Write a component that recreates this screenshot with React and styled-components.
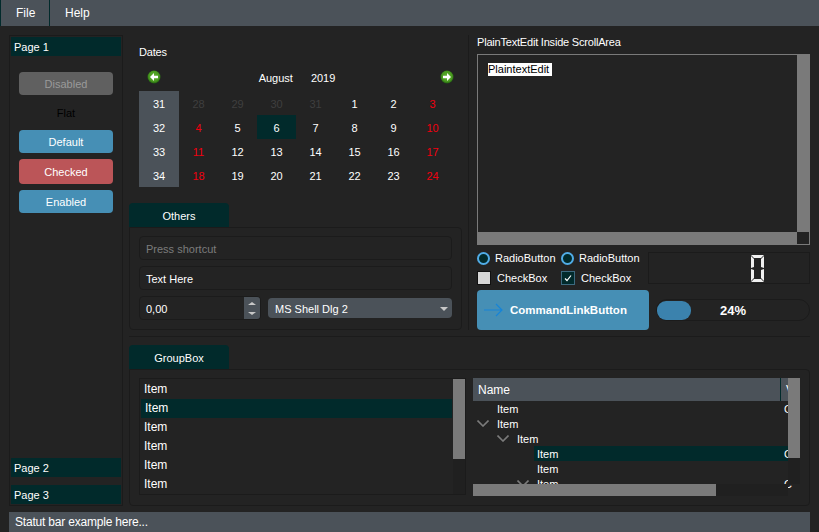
import React from "react";
import styled, { createGlobalStyle } from "styled-components";

const GlobalStyle = createGlobalStyle`
  html, body { margin: 0; padding: 0; background: #232323; }
  * { box-sizing: border-box; }
`;

const teal = "#012a2b";
const slate = "#4b5259";
const thumb = "#7a7a7a";
const line = "#1b1b1b";

const Window = styled.div`
  width: 819px;
  height: 532px;
  display: flex;
  flex-direction: column;
  overflow: hidden;
  background: #232323;
  color: #fff;
  font-family: "Liberation Sans", Arial, sans-serif;
  font-size: 11px;
`;

const MenuBar = styled.div`
  height: 26px;
  flex-shrink: 0;
  display: flex;
  background: ${slate};
  font-size: 12px;
`;

const MenuItem = styled.div`
  width: ${(p) => p.$width}px;
  padding-left: 15px;
  line-height: 26px;
  border-left: ${(p) => (p.$divided ? `1px solid ${teal}` : "none")};
`;

const Body = styled.div`
  flex: 1;
  display: flex;
  gap: 6px;
  padding: 9px 9px 0;
  min-height: 0;
`;

const ToolBox = styled.div`
  width: 114px;
  height: 471px;
  flex-shrink: 0;
  padding: 1px;
  display: flex;
  flex-direction: column;
  border: 1px solid ${line};
`;

const PageTab = styled.div`
  height: 19px;
  line-height: 21px;
  padding-left: 3px;
  background: ${teal};
  margin-top: ${(p) => p.$top || 0}px;
`;

const PageBody = styled.div`
  flex: 1;
  padding: 16px 8px 0;
  display: flex;
  flex-direction: column;
`;

const PushButton = styled.div`
  height: ${(p) => p.$height || 23}px;
  margin-bottom: ${(p) => p.$gap || 0}px;
  line-height: ${(p) => (p.$height || 23) + 2}px;
  text-align: center;
  border-radius: 4px;
  background: ${(p) => p.$bg || "transparent"};
  color: ${(p) => p.$fg || "#fff"};
`;

const Main = styled.div`
  flex: 1;
  min-width: 0;
  display: flex;
  flex-direction: column;
`;

const TopRow = styled.div`
  height: 295px;
  flex-shrink: 0;
  display: flex;
`;

const LeftColumn = styled.div`
  width: 333px;
  display: flex;
  flex-direction: column;
`;

const Caption = styled.div`
  height: ${(p) => p.$height}px;
  line-height: ${(p) => p.$line}px;
  letter-spacing: -0.2px;
`;

const DatesBox = styled.div`
  padding-left: 10px;
  height: 168px;
  flex-shrink: 0;
`;

const CalendarNav = styled.div`
  height: 22px;
  display: flex;
  align-items: center;
  padding: 0 8px 7px;
`;

const MonthYear = styled.div`
  flex: 1;
  display: flex;
  justify-content: center;
  gap: 18px;
  padding: 2px 7px 0 0;
`;

const CalendarGrid = styled.div`
  display: grid;
  grid-template-columns: 40px repeat(7, 39px);
  grid-auto-rows: 24px;
`;

const Cell = styled.div`
  display: flex;
  align-items: center;
  justify-content: center;
  padding-top: 2px;
  background: ${(p) => (p.$week ? slate : p.$selected ? teal : "transparent")};
  color: ${(p) => (p.$dim ? "#3f3f3f" : p.$red ? "#f2000f" : "#fff")};
`;

const GroupTab = styled.div`
  width: 100px;
  height: 24px;
  flex-shrink: 0;
  line-height: 27px;
  text-align: center;
  background: ${teal};
  border-radius: 4px 4px 0 0;
`;

const GroupFrame = styled.div`
  width: ${(p) => p.$width || "auto"};
  height: ${(p) => p.$height}px;
  flex-shrink: 0;
  border: 1px solid ${line};
  border-radius: 0 4px 4px 4px;
  padding: ${(p) => p.$padding};
`;

const OthersStack = styled.div`
  display: flex;
  flex-direction: column;
  gap: 6px;
`;

const Field = styled.div`
  height: 24px;
  line-height: 24px;
  padding-left: 6px;
  border: 1px solid ${line};
  border-radius: 4px;
  color: ${(p) => (p.$muted ? "#7c7c7c" : "#fff")};
`;

const SpinRow = styled.div`
  display: flex;
  align-items: center;
  gap: 7px;
`;

const SpinBox = styled.div`
  width: 122px;
  height: 24px;
  display: flex;
  border: 1px solid ${line};
  border-radius: 4px;
  overflow: hidden;
`;

const SpinValue = styled.div`
  flex: 1;
  line-height: 24px;
  padding-left: 6px;
`;

const SpinButtons = styled.div`
  width: 16px;
  display: flex;
  flex-direction: column;
  align-items: center;
  justify-content: center;
  gap: 7px;
  background: ${slate};
`;

const Triangle = styled.div`
  width: 0;
  height: 0;
  border-left: ${(p) => p.$size}px solid transparent;
  border-right: ${(p) => p.$size}px solid transparent;
  border-${(p) => (p.$up ? "bottom" : "top")}: ${(p) => p.$tall}px solid #c8c8c8;
`;

const Combo = styled.div`
  width: 184px;
  height: 20px;
  padding: 1px 4px 0 7px;
  display: flex;
  align-items: center;
  justify-content: space-between;
  background: ${slate};
  border-radius: 4px;
`;

const VSeparator = styled.div`
  width: 1px;
  height: 295px;
  margin: 0 8px 0 6px;
  background: ${line};
`;

const RightColumn = styled.div`
  width: 333px;
  display: flex;
  flex-direction: column;
`;

const PlainFrame = styled.div`
  position: relative;
  height: 191px;
  flex-shrink: 0;
  border: 1px solid ${thumb};
  padding: 8px 10px;
`;

const SelectedText = styled.span`
  display: block;
  width: fit-content;
  background: #fff;
  color: #000;
  line-height: 13px;
  padding-right: 3px;
`;

const VThumb = styled.div`
  position: absolute;
  top: ${(p) => p.$top || 0}px;
  right: 0;
  width: ${(p) => p.$width}px;
  height: ${(p) => p.$height}px;
  background: ${thumb};
`;

const HThumb = styled.div`
  position: absolute;
  left: 0;
  bottom: ${(p) => p.$bottom || 0}px;
  width: ${(p) => p.$width}px;
  height: 12px;
  background: ${thumb};
`;

const ControlsRow = styled.div`
  margin-top: 3px;
  display: flex;
  justify-content: space-between;
`;

const Choices = styled.div`
  display: grid;
  grid-template-columns: 84px 84px;
  grid-auto-rows: 20px;
`;

const Choice = styled.div`
  display: flex;
  align-items: center;
  gap: 5px;
`;

const Radio = styled.div`
  width: 13px;
  height: 13px;
  border-radius: 50%;
  background: ${teal};
  border: 2px solid #50ace6;
`;

const Check = styled.div`
  width: 14px;
  height: 14px;
  margin-right: 1px;
  display: flex;
  align-items: center;
  justify-content: center;
  background: ${(p) => (p.$on ? teal : "#d6d6d6")};
  border: 1px solid ${(p) => (p.$on ? "#3d6a80" : "#111")};
`;

const Lcd = styled.div`
  width: 162px;
  height: 32px;
  margin-top: 4px;
  padding-right: 45px;
  display: flex;
  align-items: center;
  justify-content: flex-end;
  border: 1px solid ${line};
`;

const CommandRow = styled.div`
  margin-top: 2px;
  display: flex;
  align-items: center;
  gap: 7px;
`;

const CommandLink = styled.div`
  width: 172px;
  height: 40px;
  padding-left: 7px;
  display: flex;
  align-items: center;
  gap: 7px;
  background: #468fb5;
  border-radius: 4px;
  font-weight: 700;
  font-size: 11.5px;
`;

const Progress = styled.div`
  position: relative;
  width: 154px;
  height: 22px;
  border: 1px solid ${line};
  border-radius: 11px;
  line-height: 22px;
  text-align: center;
  font-weight: 700;
  font-size: 13px;
`;

const ProgressChunk = styled.div`
  position: absolute;
  left: 0;
  top: 1px;
  bottom: 0;
  background: #3b82ad;
  border-radius: 9px;
`;

const ProgressLabel = styled.span`
  position: relative;
`;

const HSeparator = styled.div`
  height: 1px;
  flex-shrink: 0;
  margin: 6px 0 8px;
  background: ${line};
`;

const GroupInner = styled.div`
  display: flex;
  gap: 7px;
`;

const ListBox = styled.div`
  position: relative;
  width: 327px;
  height: 117px;
  padding: 1px;
  border: 1px solid ${line};
  overflow: hidden;
`;

const ListRow = styled.div`
  height: 19px;
  line-height: 19px;
  padding-left: ${(p) => (p.$selected ? 4 : 3)}px;
  margin-right: 12px;
  font-size: 12px;
  background: ${(p) => (p.$selected ? teal : "transparent")};
`;

const ScrollTrack = styled.div`
  position: absolute;
  top: ${(p) => p.$top || 0}px;
  right: ${(p) => p.$right || 0}px;
  bottom: ${(p) => p.$bottom || 0}px;
  left: ${(p) => (p.$left === undefined ? "auto" : `${p.$left}px`)};
  width: ${(p) => (p.$width ? `${p.$width}px` : "auto")};
  background: #202020;
`;

const TreeBox = styled.div`
  position: relative;
  width: 327px;
  height: 118px;
  overflow: hidden;
`;

const TreeHeader = styled.div`
  height: 23px;
  display: flex;
  font-size: 12px;
  line-height: 25px;
  background: ${slate};
`;

const HeaderCell = styled.div`
  width: ${(p) => p.$width}px;
  padding-left: 5px;
  border-right: ${(p) => (p.$divided ? `1px solid ${teal}` : "none")};
`;

const TreeRow = styled.div`
  position: relative;
  height: 15px;
  line-height: 17px;
  padding-left: ${(p) => p.$indent}px;
`;

const TreeLabel = styled.div`
  display: flex;
  width: ${(p) => 318 - p.$indent}px;
  height: 15px;
  padding-left: 3px;
  margin-left: -3px;
  background: ${(p) => (p.$selected ? teal : "transparent")};
`;

const TreeChevron = styled.svg`
  position: absolute;
  left: ${(p) => p.$indent - 20}px;
  top: 4px;
`;

const TreeValue = styled.span`
  position: absolute;
  left: 311px;
`;

const StatusBar = styled.div`
  height: 20px;
  flex-shrink: 0;
  margin: 6px 9px 0;
  padding-left: 6px;
  line-height: 20px;
  letter-spacing: -0.2px;
  background: ${slate};
  font-size: 12px;
`;

const NavArrow = ({ flip, id }) => (
  <svg width="14" height="14" viewBox="0 0 14 14">
    <defs>
      <radialGradient id={id} cx="50%" cy="45%" r="55%">
        <stop offset="0%" stopColor="#62b42f" />
        <stop offset="70%" stopColor="#4a9a20" />
        <stop offset="100%" stopColor="#1f5c10" />
      </radialGradient>
    </defs>
    <circle cx="7" cy="7" r="6.5" fill={`url(#${id})`} />
    <path
      d={flip ? "M3 5.7h4V3l4 4-4 4V8.3H3z" : "M11 5.7H7V3L3 7l4 4V8.3h4z"}
      fill="#fff"
    />
  </svg>
);

const LcdZero = () => (
  <svg width="13" height="27" viewBox="0 0 13 27" fill="#f0f0f0">
    <path d="M0 0h13l-3 3H3zM0 1l3 3v8L0 13zM13 1l-3 3v8l3 1zM0 14l3 1v8l-3 3zM13 14l-3 1v8l3 3zM0 27h13l-3-3H3z" />
  </svg>
);

const weeks = [
  ["31", [["28", "d"], ["29", "d"], ["30", "d"], ["31", "d"], ["1"], ["2"], ["3", "r"]]],
  ["32", [["4", "r"], ["5"], ["6", "s"], ["7"], ["8"], ["9"], ["10", "r"]]],
  ["33", [["11", "r"], ["12"], ["13"], ["14"], ["15"], ["16"], ["17", "r"]]],
  ["34", [["18", "r"], ["19"], ["20"], ["21"], ["22"], ["23"], ["24", "r"]]],
];

const treeRows = [
  { indent: 24, value: true },
  { indent: 24, open: true },
  { indent: 44, open: true },
  { indent: 64, value: true, selected: true },
  { indent: 64 },
  { indent: 64, open: true, value: true },
];

export default function App() {
  return (
    <Window>
      <GlobalStyle />
      <MenuBar>
        <MenuItem $width={49} $divided>File</MenuItem>
        <MenuItem $width={70} $divided>Help</MenuItem>
      </MenuBar>
      <Body>
        <ToolBox>
          <PageTab>Page 1</PageTab>
          <PageBody>
            <PushButton $bg="#606060" $fg="#9a9a9a">Disabled</PushButton>
            <PushButton $fg="#000" $height={35}>Flat</PushButton>
            <PushButton $bg="#468fb5" $gap={6}>Default</PushButton>
            <PushButton $bg="#bb5558" $height={25} $gap={6}>Checked</PushButton>
            <PushButton $bg="#468fb5">Enabled</PushButton>
          </PageBody>
          <PageTab>Page 2</PageTab>
          <PageTab $top={8}>Page 3</PageTab>
        </ToolBox>
        <Main>
          <TopRow>
            <LeftColumn>
              <DatesBox>
                <Caption $height={34} $line={34}>Dates</Caption>
                <CalendarNav>
                  <NavArrow id="navPrev" />
                  <MonthYear>
                    <span>August</span>
                    <span>2019</span>
                  </MonthYear>
                  <NavArrow id="navNext" flip />
                </CalendarNav>
                <CalendarGrid>
                  {weeks.map(([week, days]) => (
                    <React.Fragment key={week}>
                      <Cell $week>{week}</Cell>
                      {days.map(([day, kind]) => (
                        <Cell
                          key={day + kind}
                          $dim={kind === "d"}
                          $red={kind === "r"}
                          $selected={kind === "s"}
                        >
                          {day}
                        </Cell>
                      ))}
                    </React.Fragment>
                  ))}
                </CalendarGrid>
              </DatesBox>
              <GroupTab>Others</GroupTab>
              <GroupFrame $height={103} $padding="8px 9px">
                <OthersStack>
                  <Field $muted>Press shortcut</Field>
                  <Field>Text Here</Field>
                  <SpinRow>
                    <SpinBox>
                      <SpinValue>0,00</SpinValue>
                      <SpinButtons>
                        <Triangle $size={4} $tall={3} $up />
                        <Triangle $size={4} $tall={3} />
                      </SpinButtons>
                    </SpinBox>
                    <Combo>
                      MS Shell Dlg 2
                      <Triangle $size={4} $tall={4} />
                    </Combo>
                  </SpinRow>
                </OthersStack>
              </GroupFrame>
            </LeftColumn>
            <VSeparator />
            <RightColumn>
              <Caption $height={19} $line={14}>PlainTextEdit Inside ScrollArea</Caption>
              <PlainFrame>
                <SelectedText>PlaintextEdit</SelectedText>
                <VThumb $width={12} $height={177} />
                <HThumb $width={319} />
              </PlainFrame>
              <ControlsRow>
                <Choices>
                  <Choice><Radio />RadioButton</Choice>
                  <Choice><Radio />RadioButton</Choice>
                  <Choice><Check />CheckBox</Choice>
                  <Choice>
                    <Check $on>
                      <svg width="8" height="8" viewBox="0 0 8 8" fill="none" stroke="#fff" strokeWidth="1.2">
                        <path d="M1 4.5l2 2 4-5" />
                      </svg>
                    </Check>
                    CheckBox
                  </Choice>
                </Choices>
                <Lcd><LcdZero /></Lcd>
              </ControlsRow>
              <CommandRow>
                <CommandLink>
                  <svg width="19" height="14" viewBox="0 0 19 14" fill="none" stroke="#1684d8" strokeWidth="1.2">
                    <path d="M0 7h18M12 1l6 6-6 6" />
                  </svg>
                  CommandLinkButton
                </CommandLink>
                <Progress>
                  <ProgressChunk style={{ width: "34px" }} />
                  <ProgressLabel>24%</ProgressLabel>
                </Progress>
              </CommandRow>
            </RightColumn>
          </TopRow>
          <HSeparator />
          <GroupTab>GroupBox</GroupTab>
          <GroupFrame $height={137} $width="681px" $padding="8px 9px">
            <GroupInner>
              <ListBox>
                {[0, 1, 2, 3, 4, 5].map((i) => (
                  <ListRow key={i} $selected={i === 1}>Item</ListRow>
                ))}
                <ScrollTrack $width={12} />
                <VThumb $width={12} $height={80} />
              </ListBox>
              <TreeBox>
                <TreeHeader>
                  <HeaderCell $width={308} $divided>Name</HeaderCell>
                  <HeaderCell $width={19}>V</HeaderCell>
                </TreeHeader>
                {treeRows.map((row, i) => (
                  <TreeRow key={i} $indent={row.indent}>
                    {row.open && (
                      <TreeChevron $indent={row.indent} width="12" height="7" viewBox="0 0 12 7" fill="none" stroke="#7b7b7b" strokeWidth="1.6">
                        <path d="M0.5 0.5L6 6l5.5-5.5" />
                      </TreeChevron>
                    )}
                    <TreeLabel $indent={row.indent} $selected={row.selected}>
                      Item
                      {row.value && <TreeValue>C</TreeValue>}
                    </TreeLabel>
                  </TreeRow>
                ))}
                <ScrollTrack $width={12} $bottom={12} />
                <VThumb $width={12} $height={80} />
                <ScrollTrack $left={0} $right={12} $top={106} />
                <HThumb $width={243} />
              </TreeBox>
            </GroupInner>
          </GroupFrame>
        </Main>
      </Body>
      <StatusBar>Statut bar example here...</StatusBar>
    </Window>
  );
}
